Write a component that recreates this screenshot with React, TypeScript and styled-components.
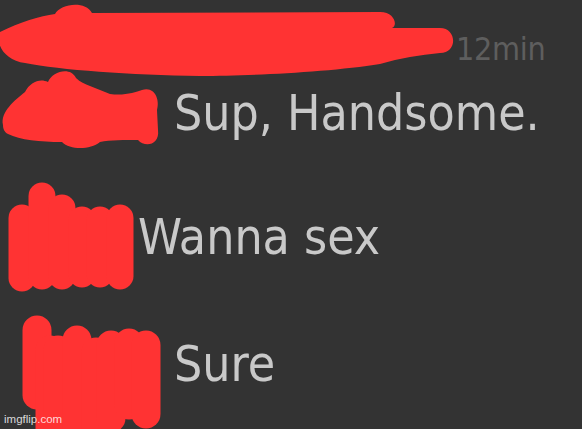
import React from "react";
import styled, { createGlobalStyle } from "styled-components";

const Global = createGlobalStyle`
  html, body { margin: 0; padding: 0; background: #333333; }
  body { width: 582px; height: 429px; overflow: hidden; }
`;

const Screen = styled.div`
  position: relative;
  width: 582px;
  height: 429px;
  background: #333333;
  overflow: hidden;
  font-family: "DejaVu Sans Condensed", "DejaVu Sans", sans-serif;
  font-stretch: condensed;
`;

const Thread = styled.div`
  display: flex;
  flex-direction: column;
`;

const Header = styled.div`
  display: flex;
  justify-content: flex-start;
  margin-top: 33px;
  padding-left: 456px;
`;

const Time = styled.span`
  font-size: 32px;
  line-height: 32px;
  color: #5e5e5e;
  letter-spacing: -0.3px;
`;

const Row = styled.div<{ $top: number; $indent: number }>`
  display: flex;
  align-items: center;
  margin-top: ${(p) => p.$top}px;
  padding-left: ${(p) => p.$indent}px;
`;

const Message = styled.span`
  font-size: 49.5px;
  line-height: 49px;
  color: #c9c9c9;
  filter: blur(0.4px);
  white-space: nowrap;
`;

const Marks = styled.svg`
  position: absolute;
  inset: 0;
  pointer-events: none;
`;

const Watermark = styled.span`
  position: absolute;
  left: 4px;
  bottom: 4px;
  font-family: "Liberation Sans", Arial, sans-serif;
  font-size: 11.5px;
  line-height: 12px;
  color: rgba(255, 255, 255, 0.82);
`;

const RED = "#ff3333";

const Scribbles: React.FC = () => (
  <Marks width={582} height={429} viewBox="0 0 582 429">
    <g fill={RED}>
      <path d="M 0 32 C 20 22, 40 16, 55 14 C 60 4, 85 0, 92 13 L 380 12 C 395 12, 398 26, 392 28 L 440 28 C 457 28, 458 53, 440 53 C 420 55, 400 58, 380 64 C 330 72, 250 76, 200 76 C 130 75, 60 70, 25 63 C 5 60, -5 45, 0 32 Z" />
      <path d="M 3 125 C 0 112, 15 100, 25 92 C 30 82, 40 78, 48 82 C 52 72, 70 66, 76 78 C 80 82, 85 84, 90 86 L 110 94 C 125 96, 135 92, 142 90 C 155 86, 160 100, 157 110 L 158 130 C 160 145, 145 148, 138 140 C 125 140, 110 140, 100 142 C 90 150, 70 150, 62 142 C 40 142, 20 140, 8 134 C 4 132, 3 128, 3 125 Z" />
    </g>
    <g stroke={RED} strokeLinecap="round" strokeWidth={27} fill="none">
      <line x1={22} y1={218} x2={22} y2={278} />
      <line x1={42} y1={196} x2={42} y2={276} />
      <line x1={62} y1={208} x2={62} y2={276} />
      <line x1={82} y1={220} x2={82} y2={274} />
      <line x1={100} y1={220} x2={100} y2={274} />
      <line x1={120} y1={218} x2={120} y2={276} />
    </g>
    <g stroke={RED} strokeLinecap="round" strokeWidth={29} fill="none">
      <line x1={37} y1={330} x2={37} y2={395} />
      <line x1={50} y1={350} x2={50} y2={445} />
      <line x1={58} y1={350} x2={58} y2={445} />
      <line x1={77} y1={340} x2={77} y2={445} />
      <line x1={96} y1={352} x2={96} y2={445} />
      <line x1={111} y1={345} x2={111} y2={418} />
      <line x1={129} y1={343} x2={129} y2={405} />
      <line x1={146} y1={345} x2={146} y2={414} />
    </g>
  </Marks>
);

export default function App() {
  return (
    <Screen>
      <Global />
      <Thread>
        <Header>
          <Time>12min</Time>
        </Header>
        <Row $top={24} $indent={174}>
          <Message>Sup, Handsome.</Message>
        </Row>
        <Row $top={75} $indent={138}>
          <Message>Wanna sex</Message>
        </Row>
        <Row $top={78} $indent={174}>
          <Message>Sure</Message>
        </Row>
      </Thread>
      <Scribbles />
      <Watermark>imgflip.com</Watermark>
    </Screen>
  );
}
